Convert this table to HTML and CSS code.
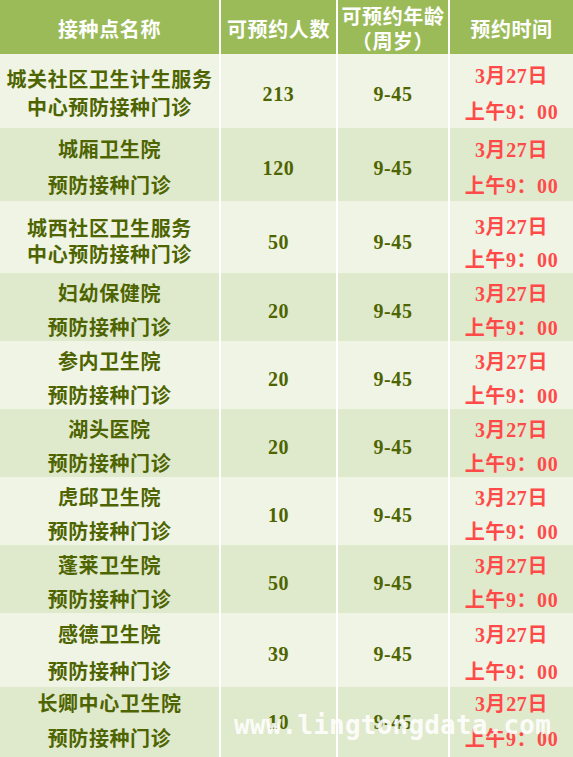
FILE: index.html
```html
<!DOCTYPE html>
<html lang="zh-CN">
<head>
<meta charset="utf-8">
<title>预约接种</title>
<link rel="stylesheet" href="styles.css">
</head>
<body>
<div class="sheet">
  <div class="table">
    <div class="row head">
      <div class="cell"><div class="ln">接种点名称</div></div>
      <div class="cell"><div class="ln">可预约人数</div></div>
      <div class="cell two"><div class="ln">可预约年龄</div><div class="ln">（周岁）</div></div>
      <div class="cell"><div class="ln">预约时间</div></div>
    </div>

    <div class="row light h72">
      <div class="cell name tight28"><div class="ln">城关社区卫生计生服务</div><div class="ln">中心预防接种门诊</div></div>
      <div class="cell num">213</div>
      <div class="cell num">9-45</div>
      <div class="cell date lh36"><div class="ln">3月27日</div><div class="ln">上午9：00</div></div>
    </div>

    <div class="row dark h71">
      <div class="cell name lh36"><div class="ln">城厢卫生院</div><div class="ln">预防接种门诊</div></div>
      <div class="cell num">120</div>
      <div class="cell num">9-45</div>
      <div class="cell date lh36"><div class="ln">3月27日</div><div class="ln">上午9：00</div></div>
    </div>

    <div class="row light h70 low">
      <div class="cell name lh26"><div class="ln">城西社区卫生服务</div><div class="ln">中心预防接种门诊</div></div>
      <div class="cell num">50</div>
      <div class="cell num">9-45</div>
      <div class="cell date lh33 lower"><div class="ln">3月27日</div><div class="ln">上午9：00</div></div>
    </div>

    <div class="row dark h66">
      <div class="cell name lh34"><div class="ln">妇幼保健院</div><div class="ln">预防接种门诊</div></div>
      <div class="cell num">20</div>
      <div class="cell num">9-45</div>
      <div class="cell date lh34"><div class="ln">3月27日</div><div class="ln">上午9：00</div></div>
    </div>

    <div class="row light h66">
      <div class="cell name lh34"><div class="ln">参内卫生院</div><div class="ln">预防接种门诊</div></div>
      <div class="cell num">20</div>
      <div class="cell num">9-45</div>
      <div class="cell date lh34"><div class="ln">3月27日</div><div class="ln">上午9：00</div></div>
    </div>

    <div class="row dark h66">
      <div class="cell name lh34"><div class="ln">湖头医院</div><div class="ln">预防接种门诊</div></div>
      <div class="cell num">20</div>
      <div class="cell num">9-45</div>
      <div class="cell date lh34"><div class="ln">3月27日</div><div class="ln">上午9：00</div></div>
    </div>

    <div class="row light h66">
      <div class="cell name lh34"><div class="ln">虎邱卫生院</div><div class="ln">预防接种门诊</div></div>
      <div class="cell num">10</div>
      <div class="cell num">9-45</div>
      <div class="cell date lh34"><div class="ln">3月27日</div><div class="ln">上午9：00</div></div>
    </div>

    <div class="row dark h66">
      <div class="cell name lh34"><div class="ln">蓬莱卫生院</div><div class="ln">预防接种门诊</div></div>
      <div class="cell num">50</div>
      <div class="cell num">9-45</div>
      <div class="cell date lh34"><div class="ln">3月27日</div><div class="ln">上午9：00</div></div>
    </div>

    <div class="row light h72">
      <div class="cell name lh37"><div class="ln">感德卫生院</div><div class="ln">预防接种门诊</div></div>
      <div class="cell num">39</div>
      <div class="cell num">9-45</div>
      <div class="cell date lh37"><div class="ln">3月27日</div><div class="ln">上午9：00</div></div>
    </div>

    <div class="row dark h72 last">
      <div class="cell name lh35"><div class="ln">长卿中心卫生院</div><div class="ln">预防接种门诊</div></div>
      <div class="cell num">10</div>
      <div class="cell num">9-45</div>
      <div class="cell date lh35"><div class="ln">3月27日</div><div class="ln">上午9：00</div></div>
    </div>
  </div>
  <div class="watermark">www.lingtongdata.com</div>
</div>
</body>
</html>
```

FILE: styles.css
```css
html, body {
  margin: 0;
  padding: 0;
  background: #ffffff;
}

.sheet {
  position: relative;
  width: 573px;
  height: 757px;
  overflow: hidden;
}

.table {
  display: flex;
  flex-direction: column;
  gap: 2px;
  background: #ffffff;
  font-family: "Liberation Serif", "Noto Sans CJK SC", serif;
  font-weight: bold;
  font-size: 20px;
  letter-spacing: 0.6px;
  color: #4e6400;
}

.row {
  display: grid;
  grid-template-columns: 219px 115px 110px 123px;
  column-gap: 2px;
}

.cell {
  display: flex;
  flex-direction: column;
  justify-content: center;
  align-items: center;
  text-align: center;
  padding-top: 4px;
  box-sizing: border-box;
  white-space: nowrap;
  line-height: 24px;
}

.head { height: 52px; }
.head .cell {
  background: #9bbb59;
  color: #ffffff;
  padding-top: 5px;
}
.head .two { line-height: 25px; }

.light .cell { background: #eff4e4; }
.dark .cell { background: #dfe9cc; }

.h72 { height: 72px; }
.h71 { height: 71px; }
.h70 { height: 70px; }
.h66 { height: 66px; }

.date { color: #ff4a4a; }

.tight28 { line-height: 28px; }
.lh26 { line-height: 26px; }
.lh33 { line-height: 33px; }
.lh34 { line-height: 34px; }
.lh35 { line-height: 35px; }
.lh36 { line-height: 36px; }
.lh37 { line-height: 37px; }

.low .cell { padding-top: 5px; }
.low .lower { padding-top: 10px; }

.last .cell {
  padding-top: 0;
  padding-bottom: 4px;
}

.watermark {
  position: absolute;
  left: 234px;
  top: 712px;
  font-family: "DejaVu Sans Mono", monospace;
  font-weight: bold;
  font-size: 26px;
  line-height: 26px;
  letter-spacing: 0.2px;
  color: rgba(255, 255, 255, 0.88);
  white-space: nowrap;
}
```
